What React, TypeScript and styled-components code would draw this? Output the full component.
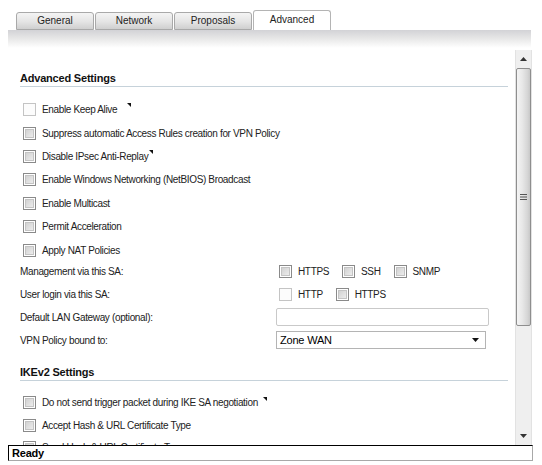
import React from "react";
import styled, { createGlobalStyle } from "styled-components";

const Global = createGlobalStyle`
  html, body { margin: 0; padding: 0; background: #fff; }
  body { padding: 8px; font-family: "Liberation Sans", Arial, sans-serif; color: #222; }
`;

const Page = styled.div`
  width: 525px;
  display: flex;
  flex-direction: column;
`;

const TabStrip = styled.div`
  display: flex;
  align-items: flex-end;
  height: 22px;
  padding-left: 8px;
`;

const Tab = styled.div<{ $active?: boolean }>`
  width: 78px;
  height: ${(p) => (p.$active ? 20 : 18)}px;
  margin-right: 1px;
  box-sizing: border-box;
  border: 1px solid ${(p) => (p.$active ? "#b4b4b4" : "#a9a9a9")};
  border-bottom: ${(p) => (p.$active ? "none" : "1px solid #a9a9a9")};
  border-radius: 3px 3px 0 0;
  background: ${(p) =>
    p.$active ? "#fff" : "linear-gradient(#f4f4f4, #e4e4e4 55%, #cfcfcf)"};
  display: flex;
  align-items: center;
  justify-content: center;
  font-size: 10px;
  color: #222;
  padding-bottom: ${(p) => (p.$active ? 2 : 1)}px;
`;

const Band = styled.div`
  height: 18px;
  width: 523px;
  background: linear-gradient(#d2d2d6, #e6e6e6 45%, #fff);
`;

const ScrollArea = styled.div`
  display: flex;
  height: 395px;
  margin-top: 2px;
  width: 524px;
`;

const Content = styled.div`
  flex: 1;
  overflow: hidden;
  padding: 22px 0 0 12px;
  box-sizing: border-box;
`;

const SectionTitle = styled.div<{ $top?: number }>`
  height: 15px;
  width: 488px;
  box-sizing: border-box;
  border-bottom: 1px solid #c6d2da;
  font-weight: bold;
  font-size: 11px;
  letter-spacing: -0.2px;
  color: #111;
  line-height: 13px;
  margin-top: ${(p) => p.$top ?? 0}px;
`;

const List = styled.div<{ $row: number }>`
  display: flex;
  flex-direction: column;
  margin-top: 11px;
  & > * { height: ${(p) => p.$row}px; flex: none; }
`;

const Row = styled.div`
  display: flex;
  align-items: center;
  font-size: 10px;
  letter-spacing: -0.35px;
  color: #222;
  white-space: nowrap;
`;

const Box = styled.span<{ $disabled?: boolean }>`
  width: 13px;
  height: 13px;
  box-sizing: border-box;
  flex: none;
  margin: 0 6px 0 3px;
  border: 1px solid ${(p) => (p.$disabled ? "#c4c4c4" : "#8a8a8a")};
  background: ${(p) => (p.$disabled ? "#fcfcfc" : "#fff")};
  padding: 1px;
  display: inline-flex;
  &::after {
    content: "";
    flex: 1;
    border: 1px solid ${(p) => (p.$disabled ? "#fcfcfc" : "#c4c4c4")};
    background: ${(p) =>
      p.$disabled ? "#fcfcfc" : "linear-gradient(135deg, #d2d2d2, #ececec)"};
  }
`;

const Mark = styled.svg<{ $gap?: number }>`
  margin-left: ${(p) => p.$gap ?? 1}px;
  align-self: flex-start;
  margin-top: 5px;
  flex: none;
`;

const Tip = ({ gap }: { gap?: number }) => (
  <Mark $gap={gap} width="4" height="4" viewBox="0 0 4 4">
    <polygon points="0,0 4,0 4,4" fill="#111" />
  </Mark>
);

const FormGrid = styled.div`
  display: grid;
  grid-template-columns: 256px 213px;
  grid-auto-rows: 23px;
  align-items: center;
  margin-top: -2px;
  font-size: 10px;
  letter-spacing: -0.35px;
  color: #222;
`;

const Opts = styled.div`
  display: flex;
  align-items: center;
`;

const Opt = styled.span`
  display: inline-flex;
  align-items: center;
  margin-right: 10px;
  font-size: 10px;
`;

const TextInput = styled.div`
  height: 18px;
  width: 213px;
  box-sizing: border-box;
  border: 1px solid #c9c9c9;
  border-radius: 2px;
  background: #fff;
`;

const Select = styled.div`
  height: 18px;
  width: 210px;
  box-sizing: border-box;
  border: 1px solid #b4b4b4;
  display: flex;
  align-items: center;
  justify-content: space-between;
  padding: 0 6px 0 3px;
  font-size: 11px;
  letter-spacing: -0.2px;
  color: #000;
`;

const Scrollbar = styled.div`
  width: 15px;
  display: flex;
  flex-direction: column;
  background: #efefef;
  border-left: 1px solid #e2e2e2;
  border-right: 1px solid #e2e2e2;
  box-sizing: content-box;
`;

const ArrowBtn = styled.div`
  height: 18px;
  display: flex;
  align-items: center;
  justify-content: center;
`;

const Thumb = styled.div`
  height: 258px;
  box-sizing: border-box;
  border: 1px solid #8e8e8e;
  border-radius: 2px;
  background: linear-gradient(90deg, #f4f4f4, #e8e8e8 40%, #d6d6d6 80%, #c8c8c8);
  display: flex;
  align-items: center;
  justify-content: center;
`;

const Track = styled.div`
  flex: 1;
`;

const StatusBar = styled.div`
  height: 16px;
  width: 525px;
  box-sizing: border-box;
  border-top: 1px solid #000;
  border-left: 1px solid #000;
  border-right: 1px solid #a8a8a8;
  border-bottom: 1px solid #a8a8a8;
  padding-left: 3px;
  font-size: 11px;
  font-weight: bold;
  line-height: 14px;
  letter-spacing: -0.2px;
  color: #000;
  background: #fff;
  position: relative;
  z-index: 1;
`;

const advanced: { label: string; disabled?: boolean; tip?: number }[] = [
  { label: "Enable Keep Alive", disabled: true, tip: 10 },
  { label: "Suppress automatic Access Rules creation for VPN Policy" },
  { label: "Disable IPsec Anti-Replay", tip: 1 },
  { label: "Enable Windows Networking (NetBIOS) Broadcast" },
  { label: "Enable Multicast" },
  { label: "Permit Acceleration" },
  { label: "Apply NAT Policies" },
];

const ike: { label: string; tip?: number }[] = [
  { label: "Do not send trigger packet during IKE SA negotiation", tip: 5 },
  { label: "Accept Hash & URL Certificate Type" },
  { label: "Send Hash & URL Certificate Type" },
];

export default function App() {
  return (
    <Page>
      <Global />
      <TabStrip>
        <Tab>General</Tab>
        <Tab>Network</Tab>
        <Tab>Proposals</Tab>
        <Tab $active>Advanced</Tab>
      </TabStrip>
      <Band />
      <ScrollArea>
        <Content>
          <SectionTitle>Advanced Settings</SectionTitle>
          <List $row={23.4}>
            {advanced.map((a) => (
              <Row key={a.label}>
                <Box $disabled={a.disabled} />
                {a.label}
                {a.tip !== undefined && <Tip gap={a.tip} />}
              </Row>
            ))}
          </List>
          <FormGrid>
            <span>Management via this SA:</span>
            <Opts>
              <Opt><Box />HTTPS</Opt>
              <Opt><Box />SSH</Opt>
              <Opt><Box />SNMP</Opt>
            </Opts>
            <span>User login via this SA:</span>
            <Opts>
              <Opt><Box $disabled />HTTP</Opt>
              <Opt><Box />HTTPS</Opt>
            </Opts>
            <span>Default LAN Gateway (optional):</span>
            <TextInput />
            <span>VPN Policy bound to:</span>
            <Select>
              Zone WAN
              <svg width="7" height="4" viewBox="0 0 7 4">
                <polygon points="0,0 7,0 3.5,4" fill="#111" />
              </svg>
            </Select>
          </FormGrid>
          <SectionTitle $top={14}>IKEv2 Settings</SectionTitle>
          <List $row={22.5}>
            {ike.map((a) => (
              <Row key={a.label}>
                <Box />
                {a.label}
                {a.tip !== undefined && <Tip gap={a.tip} />}
              </Row>
            ))}
          </List>
        </Content>
        <Scrollbar>
          <ArrowBtn>
            <svg width="7" height="4" viewBox="0 0 7 4">
              <polygon points="3.5,0 7,4 0,4" fill="#333" />
            </svg>
          </ArrowBtn>
          <Thumb>
            <svg width="7" height="6" viewBox="0 0 7 6">
              <rect x="0" y="0" width="7" height="1" fill="#555" />
              <rect x="0" y="2.5" width="7" height="1" fill="#555" />
              <rect x="0" y="5" width="7" height="1" fill="#555" />
            </svg>
          </Thumb>
          <Track />
          <ArrowBtn>
            <svg width="7" height="4" viewBox="0 0 7 4">
              <polygon points="0,0 7,0 3.5,4" fill="#333" />
            </svg>
          </ArrowBtn>
        </Scrollbar>
      </ScrollArea>
      <StatusBar>Ready</StatusBar>
    </Page>
  );
}
